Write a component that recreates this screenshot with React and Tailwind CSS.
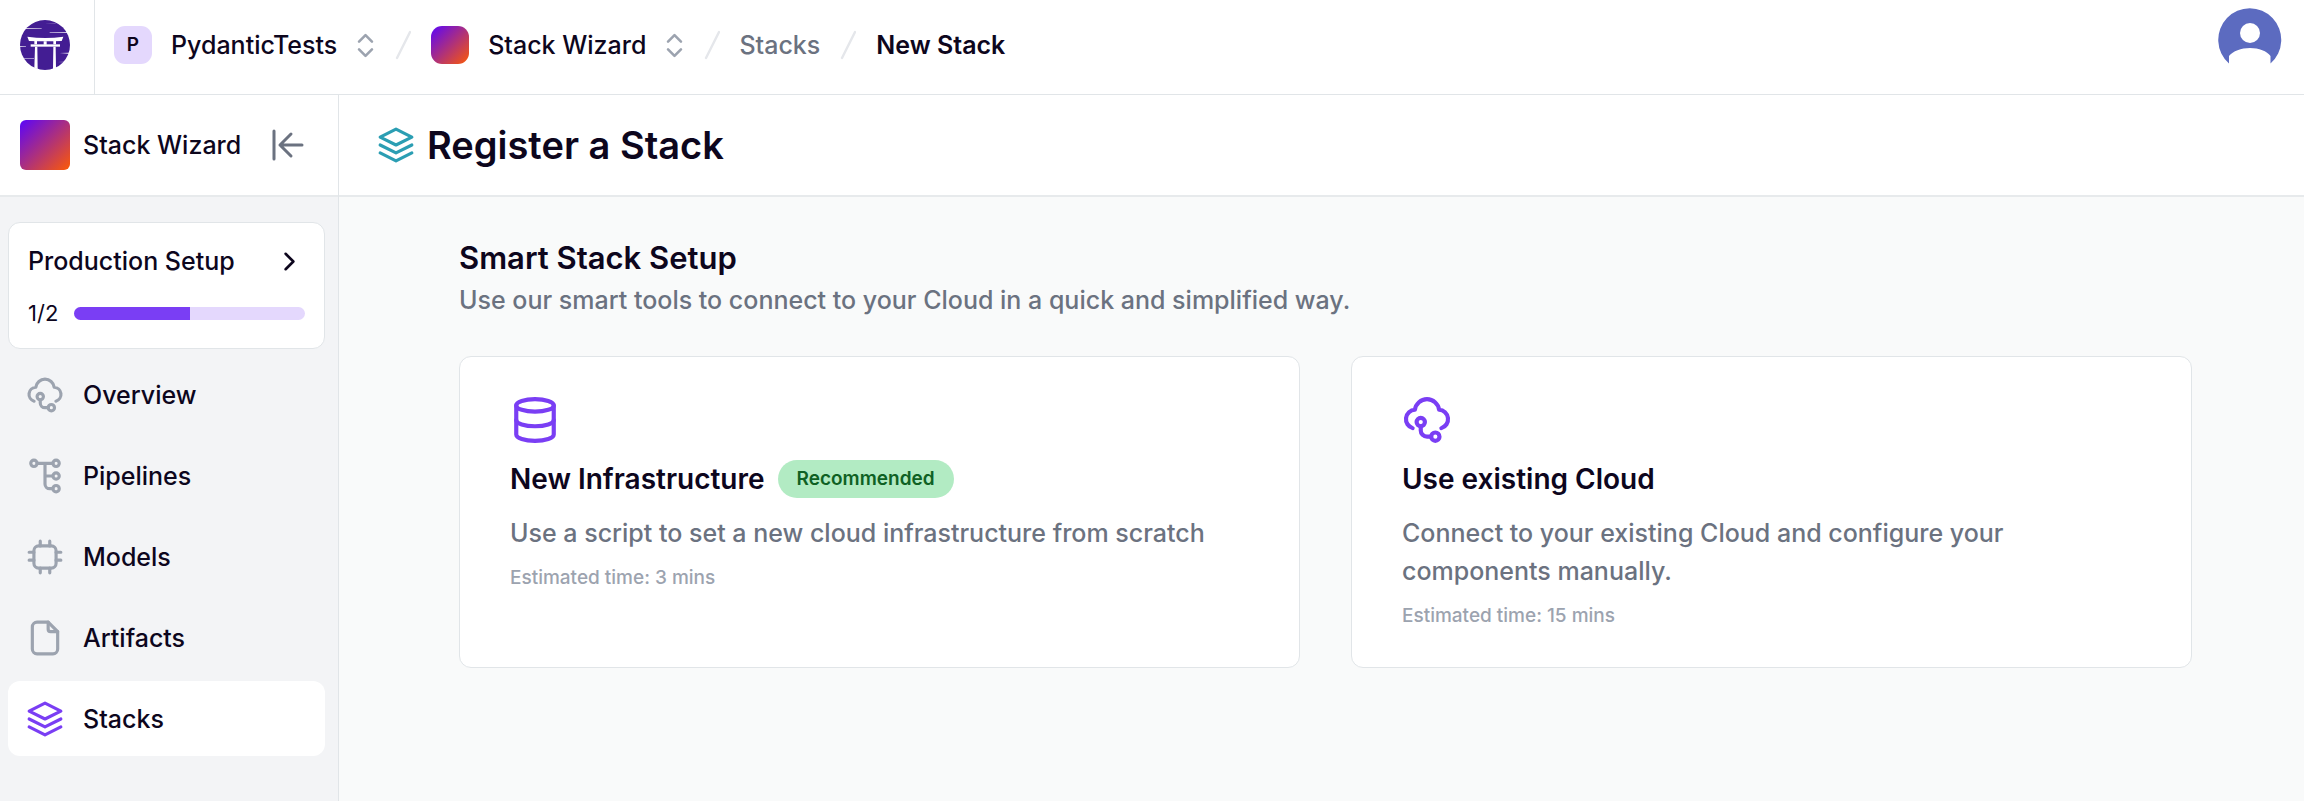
import React from "react";
import clsx from "clsx";

function Icon({ className, children, strokeWidth = 2 }) {
  return (
    <svg
      viewBox="0 0 24 24"
      fill="none"
      stroke="currentColor"
      strokeWidth={strokeWidth}
      strokeLinecap="round"
      strokeLinejoin="round"
      aria-hidden="true"
      className={clsx("shrink-0", className)}
    >
      {children}
    </svg>
  );
}

function StackIcon({ className }) {
  return (
    <Icon className={className}>
      <path d="M12 2 2 7l10 5 10-5z" />
      <path d="m2 12 10 5 10-5" />
      <path d="m2 17 10 5 10-5" />
    </Icon>
  );
}

function CloudIcon({ className }) {
  return (
    <Icon className={className}>
      <path d="M5.1 15.9A4.5 4.5 0 0 1 6.2 7.1A5.85 5.85 0 0 1 17.8 7.1A4.5 4.5 0 0 1 18.9 15.9" />
      <circle cx="9" cy="13" r="2" />
      <circle cx="16" cy="20" r="2" />
      <path d="M9 15v2a3 3 0 0 0 3 3h2" />
    </Icon>
  );
}

function PipelineIcon({ className }) {
  return (
    <Icon className={className}>
      <circle cx="5" cy="4" r="2" />
      <circle cx="19" cy="4" r="2" />
      <circle cx="19" cy="12" r="2" />
      <circle cx="19" cy="20" r="2" />
      <path d="M7 4h10M12 4v13a3 3 0 0 0 3 3h2M12 12h5" />
    </Icon>
  );
}

function ModelIcon({ className }) {
  return (
    <Icon className={className}>
      <rect x="5" y="5" width="14" height="14" rx="3" />
      <path d="M9 2v3M15 2v3M9 19v3M15 19v3M2 9h3M2 14h3M19 9h3M19 14h3" />
    </Icon>
  );
}

function FileIcon({ className }) {
  return (
    <Icon className={className}>
      <path d="M14 2H7a3 3 0 0 0-3 3v14a3 3 0 0 0 3 3h10a3 3 0 0 0 3-3V8z" />
      <path d="M14 2v4.500a1.500 1.500 0 0 0 1.500 1.500H20" />
    </Icon>
  );
}

function DatabaseIcon({ className }) {
  return (
    <Icon className={className}>
      <ellipse cx="12" cy="5" rx="9" ry="3" />
      <path d="M21 12c0 1.660-4 3-9 3s-9-1.340-9-3" />
      <path d="M3 5v14c0 1.660 4 3 9 3s9-1.340 9-3V5" />
    </Icon>
  );
}

function Logo() {
  return (
    <svg viewBox="0 0 150 150" className="size-[50px]" aria-hidden="true">
      <circle cx="75" cy="75" r="75" fill="#431d93" />
      <g fill="#fff">
        <path d="M22 50Q76 58 130 50L125 63Q76 65 27 63Z" />
        <path d="M32 73h88v7H32z" />
        <path d="M43 63h8v10h-8zM100 63h8v10h-8zM71 64h9v10h-9z" />
        <path d="M45 80h7l1 68-10-4zM100 80h7l1 64-9 4z" />
        <path d="M16 25 65 25 65 26 18 27ZM88 37 144 36 144 38 90 38ZM73 10l34 1v1zM0 78l18 1v1H0zM119 99l29-1-1 3zM10 115h32v1H12zM113 126l24-1-3 2z" />
      </g>
    </svg>
  );
}

function Avatar() {
  return (
    <svg viewBox="0 0 64 64" className="size-16" aria-hidden="true">
      <path
        fill="#5c6bc0"
        d="M11 55.500A31.500 31.500 0 1 1 52.500 55.500V48C49 43 41 40 32 40S15 43 11 48Z"
      />
      <circle cx="32" cy="25" r="10" fill="#fff" />
    </svg>
  );
}

function Slash() {
  return (
    <svg viewBox="0 0 16 30" className="h-[30px] w-4 shrink-0" aria-hidden="true">
      <path d="M15 2 2 28" stroke="#e5e7eb" strokeWidth="2.400" strokeLinecap="round" />
    </svg>
  );
}

function Switcher({ badge, name }) {
  return (
    <button type="button" className="flex items-center">
      {badge}
      <span className="ml-[19px]">{name}</span>
      <Icon className="ml-[13px] size-[31px] text-[#9ca3af]">
        <path d="m7 15 5 5 5-5" />
        <path d="m7 9 5-5 5 5" />
      </Icon>
    </button>
  );
}

function Header() {
  return (
    <header className="flex h-[95px] items-stretch border-b border-[#e1e5e8] bg-white">
      <a
        href="#"
        aria-label="Home"
        className="flex w-[95px] shrink-0 items-center border-r border-[#e1e5e8] pl-5 pb-1"
      >
        <Logo />
      </a>
      <nav aria-label="Breadcrumb" className="flex flex-1 items-center pb-1 pl-[19px]">
        <Switcher
          name="PydanticTests"
          badge={
            <span className="flex size-[38px] items-center justify-center rounded-[11px] bg-[#e4d8fd] text-[19px] font-semibold">
              P
            </span>
          }
        />
        <span className="ml-[14px] mr-5 flex"><Slash /></span>
        <Switcher
          name="Stack Wizard"
          badge={<span className="size-[38px] rounded-[11px] bg-linear-to-br/srgb from-[#5a05fa] to-[#fc5a05]" />}
        />
        <span className="mx-[14px] flex"><Slash /></span>
        <a href="#" className="ml-[5px] text-[#6b7280]">Stacks</a>
        <span className="mx-5 flex"><Slash /></span>
        <span className="font-semibold">New Stack</span>
      </nav>
      <button type="button" aria-label="Account" className="mr-[22px] self-start pt-2">
        <Avatar />
      </button>
    </header>
  );
}

const NAV = [
  { label: "Overview", Glyph: CloudIcon },
  { label: "Pipelines", Glyph: PipelineIcon },
  { label: "Models", Glyph: ModelIcon },
  { label: "Artifacts", Glyph: FileIcon },
  { label: "Stacks", Glyph: StackIcon, active: true },
];

function Sidebar() {
  return (
    <aside className="flex w-[339px] shrink-0 flex-col border-r border-[#e1e5e8] bg-[#f3f4f6]">
      <div className="flex h-[102px] items-center border-b-2 border-[#e7eaec] bg-white pl-5">
        <span className="size-[50px] rounded-md bg-linear-to-br/srgb from-[#5a05fa] to-[#fc5a05]" />
        <span className="ml-[13px] flex-1">Stack Wizard</span>
        <button type="button" aria-label="Collapse sidebar" className="mr-[31px] text-[#6b7280]">
          <svg viewBox="0 0 38 38" className="size-[38px]" fill="none" stroke="currentColor" strokeWidth="3" strokeLinecap="round" strokeLinejoin="round" aria-hidden="true">
            <path d="M5 5v28M33 19H11M22 8 11 19l11 11" />
          </svg>
        </button>
      </div>
      <div className="flex flex-col pl-2 pr-[13px] pt-[25px]">
        <a href="#" className="block rounded-xl border border-[#e1e5e8] bg-white p-[19px]">
          <span className="flex items-center justify-between leading-[38px]">
            Production Setup
            <Icon className="size-[31px]">
              <path d="m9 6 6 6-6 6" />
            </Icon>
          </span>
          <span className="mt-[18px] flex items-center gap-4 text-[22px] leading-[31px] font-normal">
            1/2
            <span className="h-[13px] flex-1 overflow-hidden rounded-full bg-[#e4d8fd]">
              <span className="block h-full w-1/2 bg-[#7a3ef4]" />
            </span>
          </span>
        </a>
        <nav aria-label="Main" className="mt-2">
          <ul className="flex flex-col gap-1.5">
            {NAV.map(({ label, Glyph, active }) => (
              <li key={label}>
                <a
                  href="#"
                  aria-current={active ? "page" : undefined}
                  className={clsx("flex h-[75px] items-center gap-[19px] rounded-xl pl-[18px]", active && "bg-white")}
                >
                  <Glyph className={clsx("size-[38px]", active ? "text-[#7a3ef4]" : "text-[#9ca3af]")} />
                  {label}
                </a>
              </li>
            ))}
          </ul>
        </nav>
      </div>
    </aside>
  );
}

function OptionCard({ icon, title, badge, description, time }) {
  return (
    <a href="#" className="rounded-xl border border-[#e1e5e8] bg-white px-[50px] pb-[37px] pt-[38px]">
      {icon}
      <span className="mt-[15px] flex h-[38px] items-center gap-[13px]">
        <h3 className="text-[28px] font-semibold">{title}</h3>
        {badge && (
          <span className="flex h-full items-center rounded-full bg-[#b2ebc3] px-[19px] text-[19px] font-semibold text-[#0f6124]">
            {badge}
          </span>
        )}
      </span>
      <p className="mt-4 leading-[38px] text-[#6b7280]">{description}</p>
      <p className="mt-3 text-[19px] leading-7 text-[#9ca3af]">{time}</p>
    </a>
  );
}

export default function App() {
  return (
    <div className="flex min-h-screen flex-col bg-[#f9fafa] font-['Inter',sans-serif] text-[25px] leading-[38px] font-medium text-[#0d061d]">
      <Header />
      <div className="flex flex-1">
        <Sidebar />
        <main className="min-w-0 flex-1">
          <div className="flex h-[102px] items-center gap-3 border-b-2 border-[#e7eaec] bg-white pl-[38px]">
            <StackIcon className="size-[38px] text-[#2b9eb3]" />
            <h1 className="text-[38px] font-semibold">Register a Stack</h1>
          </div>
          <section className="pb-10 pl-[120px] pr-28 pt-[37px]">
            <h2 className="text-[31px] leading-[47px] font-semibold">Smart Stack Setup</h2>
            <p className="text-[#6b7280]">
              Use our smart tools to connect to your Cloud in a quick and simplified way.
            </p>
            <div className="mt-[37px] grid grid-cols-2 gap-[51px]">
              <OptionCard
                icon={<DatabaseIcon className="size-[50px] text-[#7a3ef4]" />}
                title="New Infrastructure"
                badge="Recommended"
                description="Use a script to set a new cloud infrastructure from scratch"
                time="Estimated time: 3 mins"
              />
              <OptionCard
                icon={<CloudIcon className="size-[50px] text-[#7a3ef4]" />}
                title="Use existing Cloud"
                description="Connect to your existing Cloud and configure your components manually."
                time="Estimated time: 15 mins"
              />
            </div>
          </section>
        </main>
      </div>
    </div>
  );
}
